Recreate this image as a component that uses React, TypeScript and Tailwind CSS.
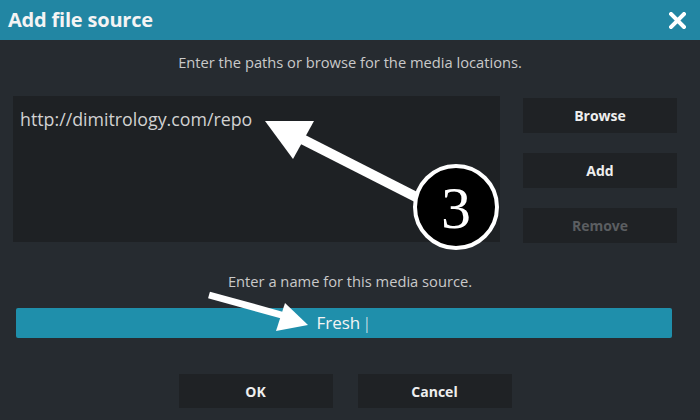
import React from "react";

const font = { fontFamily: '"Open Sans", "DejaVu Sans", sans-serif' };

function SideButton({ label, disabled }: { label: string; disabled?: boolean }) {
  return (
    <div
      className={`h-[35px] w-[154px] bg-[#1f2225] flex items-center justify-center text-[14px] font-bold ${
        disabled ? "text-[#5b5e61]" : "text-[#eeeeee]"
      }`}
    >
      {label}
    </div>
  );
}

function Annotations() {
  return (
    <svg className="absolute inset-0 pointer-events-none" width="700" height="420">
      {/* big arrow pointing at the path */}
      <line x1="420" y1="199" x2="300" y2="138" stroke="#ffffff" strokeWidth="10" />
      <polygon points="265,121 314,121 293,159" fill="#ffffff" />
      {/* small arrow pointing at the name */}
      <line x1="209" y1="295" x2="285" y2="316" stroke="#ffffff" strokeWidth="7" />
      <polygon points="308,325 285,303 276,331" fill="#ffffff" />
      {/* step badge */}
      <circle cx="456" cy="207" r="41" fill="#000000" stroke="#ffffff" strokeWidth="4" />
      <text
        x="456"
        y="228"
        textAnchor="middle"
        fill="#ffffff"
        fontSize="60"
        fontFamily='"Liberation Serif", serif'
      >
        3
      </text>
    </svg>
  );
}

export default function App() {
  return (
    <div className="relative w-[700px] h-[420px] overflow-hidden bg-[#262b30]" style={font}>
      {/* Header */}
      <div className="h-[40px] bg-[#2286a3] flex items-center justify-between pl-[8px] pr-[14px]">
        <span className="text-[20px] font-bold text-[#f4f4f4] tracking-[-0.2px]">Add file source</span>
        <svg width="17" height="17" viewBox="0 0 17 17">
          <path d="M2 2 L15 15 M15 2 L2 15" stroke="#ffffff" strokeWidth="4" strokeLinecap="square" />
        </svg>
      </div>

      <div className="pt-[12px] text-center text-[14.7px] leading-[20px] text-[#c9c9c9]">
        Enter the paths or browse for the media locations.
      </div>

      {/* Paths and actions */}
      <div className="mt-[24px] flex pl-[13px] gap-[23px]">
        <div className="w-[487px] h-[146px] bg-[#1e2124] px-[7px] pt-[10px]">
          <span className="text-[17.8px] text-[#d2d2d2]">http://dimitrology.com/repo</span>
        </div>
        <div className="flex flex-col gap-[20px] pt-[2px]">
          <SideButton label="Browse" />
          <SideButton label="Add" />
          <SideButton label="Remove" disabled />
        </div>
      </div>

      <div className="mt-[28px] text-center text-[14.7px] leading-[20px] text-[#c9c9c9]">
        Enter a name for this media source.
      </div>

      <div className="mt-[17px] ml-[16px] mr-[28px] h-[30px] bg-[#1f8fab] rounded-[2px] flex items-center justify-center">
        <span className="text-[17px] text-[#f4f4f4]">
          Fresh<span className="ml-[2px] font-light">|</span>
        </span>
      </div>

      <div className="mt-[36px] flex justify-center gap-[25px] pr-[10px]">
        <div className="w-[154px] h-[34px] bg-[#1f2225] flex items-center justify-center text-[14px] font-bold text-[#eeeeee]">
          OK
        </div>
        <div className="w-[154px] h-[34px] bg-[#1f2225] flex items-center justify-center text-[14px] font-bold text-[#eeeeee]">
          Cancel
        </div>
      </div>

      <Annotations />
    </div>
  );
}
